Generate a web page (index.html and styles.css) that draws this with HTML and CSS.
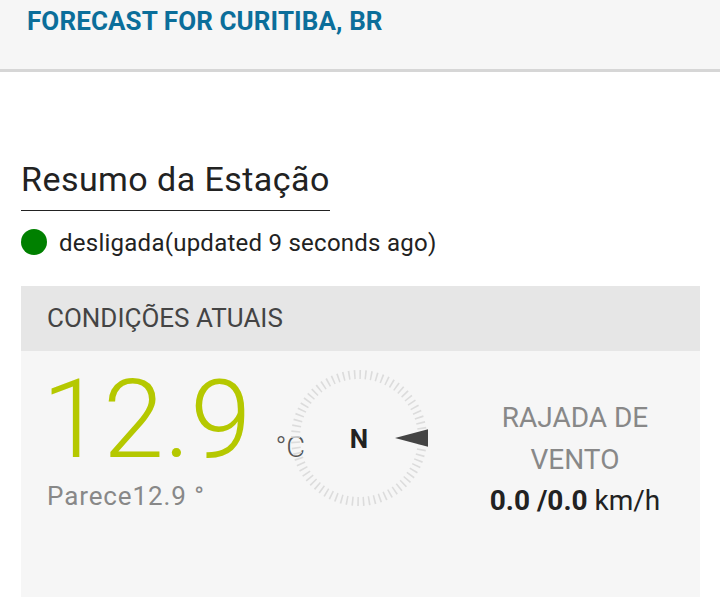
FILE: index.html
```html
<!DOCTYPE html>
<html lang="pt">
<head>
<meta charset="utf-8">
<title>Forecast for Curitiba, BR</title>
<link rel="stylesheet" href="styles.css">
</head>
<body>
<header class="topbar">
  <h1 class="title">FORECAST FOR CURITIBA, BR</h1>
</header>
<main class="content">
  <h2 class="section-title">Resumo da Estação</h2>
  <div class="status">
    <span class="dot"></span>
    <span class="status-text">desligada(updated 9 seconds ago)</span>
  </div>
  <section class="card">
    <div class="card-head">CONDIÇÕES ATUAIS</div>
    <div class="card-body">
      <div class="temp-col">
        <div class="temp"><span class="temp-val">12.9</span><span class="temp-unit">°C</span></div>
        <div class="feels">Parece12.9 °</div>
      </div>
      <div class="compass">
        <svg class="compass-svg" width="140" height="140" viewBox="0 0 140 140">
          <circle class="ticks" cx="70" cy="70" r="63.5"></circle>
          <text class="compass-n" x="70" y="79.5" text-anchor="middle">N</text>
          <polygon class="needle" points="106,70 139,61.3 139,78.7"></polygon>
        </svg>
      </div>
      <div class="wind">
        <div class="wind-label">RAJADA DE VENTO</div>
        <div class="wind-value"><b>0.0 /0.0</b> km/h</div>
      </div>
    </div>
  </section>
</main>
</body>
</html>
```
FILE: styles.css
```css
* { box-sizing: border-box; }
html, body { margin: 0; padding: 0; background: #ffffff; }
body { font-family: Roboto, "Noto Sans", sans-serif; color: #222222; }

.topbar {
  height: 72px;
  background: #f6f6f6;
  border-bottom: 3px solid #d6d6d6;
  padding: 5px 0 0 27px;
}
.title {
  margin: 0;
  font-size: 26px;
  line-height: 32px;
  font-weight: 700;
  letter-spacing: 0.1px;
  color: #0b6e9a;
}

.content { padding: 0 20px 0 21px; }

.section-title {
  display: inline-block;
  margin: 87px 0 0 0;
  padding-bottom: 11px;
  font-size: 34px;
  line-height: 40px;
  font-weight: 400;
  letter-spacing: 0.45px;
  color: #222222;
  border-bottom: 1px solid #222222;
}

.status {
  display: flex;
  align-items: flex-start;
  gap: 12px;
  margin-top: 18px;
}
.dot {
  flex: none;
  width: 26px;
  height: 26px;
  border-radius: 50%;
  background: #008000;
}
.status-text {
  font-size: 24px;
  line-height: 28px;
  letter-spacing: 0.25px;
  color: #222222;
}

.card { margin-top: 29px; }
.card-head {
  height: 65px;
  background: #e6e6e6;
  padding-left: 26px;
  font-size: 26px;
  line-height: 65px;
  color: #444444;
}
.card-body {
  background: #f6f6f6;
  min-height: 260px;
  display: grid;
  grid-template-columns: 242px 140px 1fr;
  padding-left: 26px;
}

.temp-col { padding-top: 14px; white-space: nowrap; }
.temp { display: flex; align-items: baseline; height: 110px; }
.temp-val {
  font-size: 110px;
  line-height: 110px;
  font-weight: 300;
  color: #b5c800;
  margin-left: -5px;
}
.temp-unit {
  font-size: 29px;
  font-weight: 300;
  color: #555555;
  margin-left: 24px;
}
.feels {
  margin-top: 7px;
  font-size: 26px;
  line-height: 28px;
  letter-spacing: 0.9px;
  color: #888888;
}

.compass { padding-top: 17px; position: relative; z-index: 0; }
.compass-svg { display: block; }
.ticks {
  fill: none;
  stroke: #dcdcdc;
  stroke-width: 9;
  stroke-dasharray: 1.6 3.94;
}
.compass-n {
  font-family: Roboto, sans-serif;
  font-size: 26px;
  font-weight: 700;
  fill: #222222;
}
.needle { fill: #444444; }

.wind {
  padding: 46px 20px 0 41px;
  text-align: center;
  font-size: 28px;
  line-height: 41.6px;
}
.wind-label { color: #888888; }
.wind-value { color: #222222; }
.wind-value b { font-weight: 700; }
```
